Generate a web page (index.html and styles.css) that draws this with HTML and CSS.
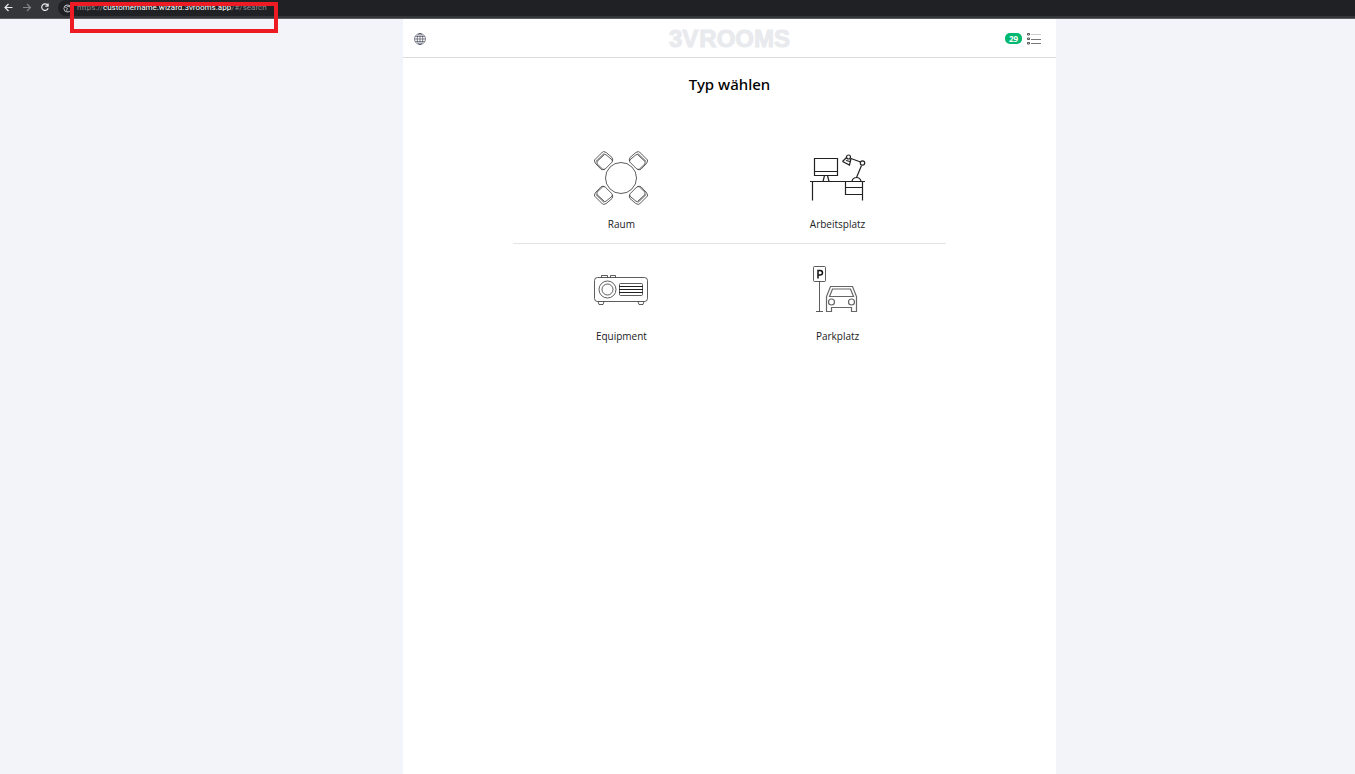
FILE: index.html
```html
<!DOCTYPE html>
<html lang="de">
<head>
<meta charset="utf-8">
<title>3V ROOMS</title>
<link rel="stylesheet" href="styles.css">
</head>
<body>
<div class="browser">
  <button class="nav" aria-label="Zurück"><svg viewBox="0 0 10 10"><path d="M8.500 5.500H1M4.500 2 1 5.500 4.500 9"/></svg></button>
  <button class="nav nav-off" aria-label="Vorwärts"><svg viewBox="0 0 10 10"><path d="M1 5.500h7.500M5 2l3.500 3.500L5 9"/></svg></button>
  <button class="nav" aria-label="Neu laden"><svg viewBox="0 0 10 10"><path d="M7.500 3A3.300 3.300 0 1 0 8.100 6.300M8.100 1.500v2.700H5.300"/></svg></button>
  <div class="address">
    <svg class="site" viewBox="0 0 10 10"><circle cx="5" cy="5" r="4"/><path d="M2 3l3 2-1 2 1 1.800M4 1l1 2 2-.5 1.500 2"/></svg>
    <a class="url" href="#/search">https://<b>customername.wizard.3vrooms.app</b>/#/search</a>
  </div>
  <div class="marker"></div>
</div>
<div class="page">
  <main class="app">
    <header class="top">
      <button class="icon-btn" aria-label="Sprache">
        <svg class="globe" viewBox="0 0 12 12"><circle cx="6" cy="6" r="5.500"/><ellipse cx="6" cy="6" rx="2.800" ry="5.500"/><path d="M6 .5v11M.5 6h11M1.300 3.500h9.400M1.300 8.500h9.400"/></svg>
      </button>
      <div class="logo"><span>3V</span> <span>ROOMS</span></div>
      <button class="icon-btn list-btn" aria-label="Buchungen">
        <span class="badge">29</span>
        <svg class="list" viewBox="0 0 14 12"><path class="faint" d="M4 1.500h10"/><path class="lines" d="M4 6.500h10M4 10.500h10"/><path class="dots" d="M.5.500h2v1.500h-2zM.5 5h2v1.500h-2zM.5 9.500h2v1.500h-2z"/></svg>
      </button>
    </header>
    <h1 class="title">Typ wählen</h1>
    <nav class="types">
      <a class="type" href="#raum">
        <svg class="pic" viewBox="0 0 54 54">
          <defs><g id="chair"><path d="M.5 9 8.500 1Q9.500.2 11 1L12.500 1.700 18 6.500Q19 8 18.500 10M.5 9Q.2 10 1 11.500L2 13l5 5.200Q8.500 19 10.500 18.500"/><path d="M1.700 10.700 10.300 2.300"/><path d="M3 10.500 10.500 3.500 12 3.700 18 8.800Q18.800 10 18 11.200L11.200 18Q9.500 18.800 8.500 18L3 12.800z"/></g></defs>
          <circle cx="27" cy="27" r="15.500"/>
          <use href="#chair"/>
          <use href="#chair" transform="matrix(-1 0 0 1 54 0)"/>
          <use href="#chair" transform="matrix(1 0 0 -1 0 54)"/>
          <use href="#chair" transform="matrix(-1 0 0 -1 54 54)"/>
        </svg>
        <span>Raum</span>
      </a>
      <a class="type" href="#arbeitsplatz">
        <svg class="pic wide" viewBox="0 0 56 54">
          <path class="bold" d="M4.500 7.500h23v17h-23zM4.500 20.500h23M14.500 24.500l-1.500 6M17.500 24.500l1.500 6M0 30.500h55M2.500 30.500v19M52.500 30.500v19M35.500 30.500v13h17M35.500 36.500h17"/>
          <path class="bold" d="M42 30Q43 26.500 46.500 26.500T51 30M46.500 26.500l5-12M50.500 11 41 7.500M32.500 10.500 36.500 6.500M41 7.500 39.500 14 32.500 10.500M36 9.500 40 10.500"/>
          <circle class="bold" cx="52.500" cy="12" r="2.200"/><circle class="bold" cx="38.500" cy="6" r="2"/>
        </svg>
        <span>Arbeitsplatz</span>
      </a>
      <a class="type" href="#equipment">
        <svg class="pic" viewBox="0 0 54 54">
          <rect x=".5" y="14.500" width="53" height="24" rx="3"/>
          <path d="M7.500 14.500v-2h6v2M16.500 14.500v-2h5v2M4 38.500l1 3h4l1-3M44 38.500l1 3h4l1-3"/>
          <circle cx="13.500" cy="26.500" r="8.500"/><circle cx="13.500" cy="26.500" r="5.500"/>
          <rect x="25.500" y="20.500" width="23" height="12" rx="1"/>
          <path class="bold" d="M25 23.500h24M25 26.500h24M25 29.500h24"/>
        </svg>
        <span>Equipment</span>
      </a>
      <a class="type" href="#parkplatz">
        <svg class="pic wide" viewBox="0 0 56 54">
          <rect x="3.500" y="3.500" width="12" height="15" rx="1"/>
          <path d="M9.500 18.500v30M6 48.500h7"/>
          <path class="letter" d="M8 15.500v-8h2q2.500 0 2.500 2.300t-2.500 2.300H8"/>
          <g class="car"><path d="M16.500 48.500v-15l4-10h22l4 10v15h-5v-4h-20v4zM19.500 33.500l3-7.500h18l3 7.500z"/><circle cx="21.500" cy="39" r="3"/><circle cx="41.500" cy="39" r="3"/></g>
        </svg>
        <span>Parkplatz</span>
      </a>
    </nav>
  </main>
</div>
</body>
</html>
```
FILE: styles.css
```css
* { box-sizing: border-box; }
body {
  margin: 0;
  min-height: 100vh;
  display: flex;
  flex-direction: column;
  background: #f3f4f9;
  font-family: "Open Sans", "Noto Sans", sans-serif;
  color: #222;
}
button { border: 0; padding: 0; background: none; font: inherit; }
a { color: inherit; text-decoration: none; }
svg { fill: none; stroke: currentColor; display: block; }

.browser {
  position: relative;
  display: flex;
  align-items: flex-start;
  gap: 8px;
  height: 19px;
  padding-left: 4px;
  background: #35363a;
  border-bottom: 1px solid #5b5c60;
}
.nav { color: #e8eaed; padding-top: 2px; }
.nav svg { width: 10px; height: 10px; stroke-width: 1.2; }
.nav-off { color: #85868a; }
.address {
  flex: 1;
  display: flex;
  align-items: center;
  gap: 5px;
  height: 16px;
  padding-left: 5px;
  background: #202124;
  border-radius: 8px 0 0 8px;
}
.site { width: 9px; height: 9px; color: #bdc1c6; }
.url { font-family: Roboto, sans-serif; font-size: 8px; line-height: 16px; color: #8b8e93; }
.url b { font-weight: 400; color: #fff; }
.marker {
  position: absolute;
  left: 70px;
  top: 2px;
  width: 208px;
  height: 31px;
  border: 4px solid #ed1c24;
}

.page {
  flex: 1;
  display: grid;
  grid-template-columns: 403fr 653fr 299fr;
}
.app { grid-column: 2; background: #fff; }
.top {
  display: grid;
  grid-template-columns: 1fr auto 1fr;
  align-items: center;
  height: 39px;
  padding: 1px 11px 0;
  border-bottom: 1px solid #dcdcde;
}
.icon-btn { justify-self: start; color: #343b4d; }
.globe { width: 12px; height: 12px; stroke-width: 0.6; }
.list-btn { justify-self: end; display: flex; align-items: center; gap: 5px; margin-right: 4px; }
.badge {
  width: 17px;
  border-radius: 5px;
  background: #00b871;
  color: #fff;
  font-size: 8px;
  font-weight: 700;
  line-height: 11px;
  text-align: center;
}
.list { width: 14px; height: 12px; }
.lines { stroke: #777; }
.faint { stroke: #ccc; }
.dots { stroke: #333; stroke-width: 0.8; }
.logo {
  display: flex;
  gap: 1px;
  font: 700 24px/36px "Liberation Sans", sans-serif;
  color: #e9eaee;
  -webkit-text-stroke: 1px #e9eaee;
}
.title {
  margin: 14px 0 0;
  font-family: "Noto Sans", sans-serif;
  font-size: 15px;
  font-weight: 500;
  line-height: 24px;
  text-align: center;
  color: #000;
}
.types {
  display: grid;
  grid-template-columns: 1fr 1fr;
  width: 66.2%;
  margin: 36px auto 0;
}
.type {
  display: flex;
  flex-direction: column;
  align-items: center;
  gap: 11px;
  padding: 19px 0 11px;
  font-size: 10px;
  line-height: 16px;
}
.type:nth-child(-n+2) { border-bottom: 1px solid #e4e4e6; }
.pic { width: 54px; height: 54px; stroke: #333; stroke-width: 0.8; }
.wide { width: 56px; }
.bold { stroke: #222; stroke-width: 1.2; }
.letter { stroke: #111; stroke-width: 1.5; }
.car { stroke: #666; stroke-width: 1.2; }
```
